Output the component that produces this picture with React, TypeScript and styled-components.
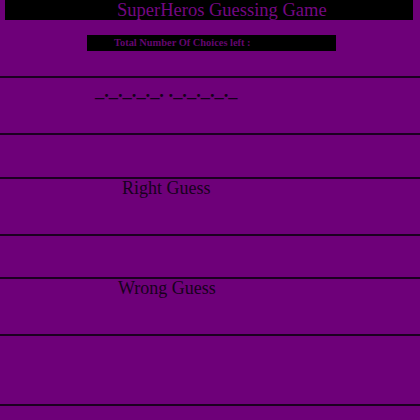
import React from "react";
import styled, { createGlobalStyle } from "styled-components";

const Global = createGlobalStyle`
  html, body {
    margin: 0;
    padding: 0;
    background: #6e0079;
  }
  body {
    font-family: "Liberation Serif", "Times New Roman", serif;
    width: 420px;
    height: 420px;
    overflow: hidden;
  }
`;

const Page = styled.div`
  display: flex;
  flex-direction: column;
  width: 420px;
  height: 420px;
  background: #6e0079;
`;

const TopSection = styled.div`
  display: flex;
  flex-direction: column;
  height: 76px;
`;

const TitleBar = styled.h1`
  margin: 0 7px 0 5px;
  height: 20px;
  background: #000;
  color: #750883;
  font-family: "Liberation Serif", serif;
  font-weight: normal;
  font-size: 18.5px;
  line-height: 20px;
  padding-left: 112px;
`;

const ChoicesBar = styled.div`
  margin: 15px 0 0 87px;
  width: 249px;
  height: 16px;
  background: #000;
  color: #64066f;
  font-weight: bold;
  font-size: 10.4px;
  line-height: 16px;
  padding-left: 27px;
  box-sizing: border-box;
`;

const Rule = styled.div`
  height: 2px;
  background: #1c0021;
  flex: none;
`;

const Band = styled.div<{ $h: number }>`
  height: ${(p) => p.$h}px;
  flex: none;
`;

const Blanks = styled.div`
  padding: 4px 0 0 95px;
  font-size: 18.4px;
  font-weight: bold;
  line-height: 18px;
  color: #14001a;
  white-space: pre;
`;

const Verdict = styled.div<{ $left: number }>`
  padding-left: ${(p) => p.$left}px;
  font-size: 18px;
  line-height: 18px;
  color: #17001c;
`;

export default function App() {
  return (
    <>
      <Global />
      <Page>
        <TopSection>
          <TitleBar>SuperHeros Guessing Game</TitleBar>
          <ChoicesBar>Total Number Of Choices left :</ChoicesBar>
        </TopSection>
        <Rule />
        <Band $h={55}>
          <Blanks>_._._._._. ._._._._._</Blanks>
        </Band>
        <Rule />
        <Band $h={42} />
        <Rule />
        <Band $h={55}>
          <Verdict $left={122}>Right Guess</Verdict>
        </Band>
        <Rule />
        <Band $h={41} />
        <Rule />
        <Band $h={55}>
          <Verdict $left={118}>Wrong Guess</Verdict>
        </Band>
        <Rule />
        <Band $h={68} />
        <Rule />
      </Page>
    </>
  );
}
